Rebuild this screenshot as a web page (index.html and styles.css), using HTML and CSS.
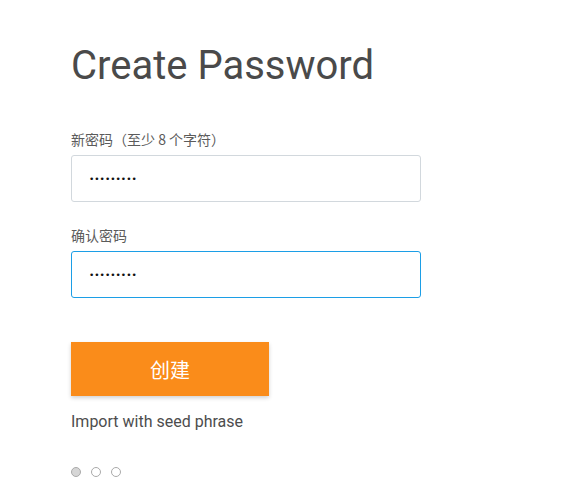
FILE: index.html
```html
<!DOCTYPE html>
<html lang="zh-CN">
<head>
<meta charset="utf-8">
<link rel="stylesheet" href="styles.css">
</head>
<body>
<div class="page">
  <h1 class="title">Create Password</h1>
  <div class="field">
    <label class="label">新密码（至少 8 个字符）</label>
    <div class="input">•••••••••</div>
  </div>
  <div class="field">
    <label class="label">确认密码</label>
    <div class="input focused">•••••••••</div>
  </div>
  <button class="btn">创建</button>
  <div class="import">Import with seed phrase</div>
  <div class="dots">
    <span class="dot active"></span>
    <span class="dot"></span>
    <span class="dot"></span>
  </div>
</div>
</body>
</html>
```
FILE: styles.css
```css
html, body {
  margin: 0;
  padding: 0;
  background: #fff;
}
.page {
  padding: 40px 0 0 71px;
  font-family: Roboto, "Noto Sans CJK SC", sans-serif;
  color: #4d4d4d;
}
.title {
  margin: 0;
  font-size: 40px;
  font-weight: 400;
  line-height: 52px;
  color: #4a4a4a;
}
.field {
  display: flex;
  flex-direction: column;
  margin-top: 37px;
}
.field + .field {
  margin-top: 23px;
}
.label {
  font-size: 14px;
  line-height: 20px;
  color: #5b5b5b;
  margin-bottom: 6px;
  font-family: "Noto Sans CJK SC", sans-serif;
}
.input {
  box-sizing: border-box;
  width: 350px;
  height: 47px;
  border: 1px solid #d2d8dd;
  border-radius: 3px;
  padding: 0 17px;
  display: flex;
  align-items: center;
  font-size: 9px;
  color: #111;
  font-family: "DejaVu Sans", sans-serif;
}
.input.focused {
  border-color: #1c9ee6;
}
.btn {
  display: block;
  margin-top: 44px;
  width: 198px;
  height: 54px;
  border: none;
  border-radius: 0;
  background: #fa8c1a;
  color: #fff;
  font-size: 20px;
  font-family: "Noto Sans CJK SC", sans-serif;
  box-shadow: 0 2px 4px rgba(0,0,0,0.18);
  padding: 0;
}
.import {
  margin-top: 16px;
  font-size: 16px;
  line-height: 20px;
  color: #4d4d4d;
}
.dots {
  display: flex;
  gap: 10px;
  margin-top: 35px;
}
.dot {
  box-sizing: border-box;
  width: 10px;
  height: 10px;
  border-radius: 50%;
  border: 1px solid #aaa;
  background: #fff;
}
.dot.active {
  background: #d6d6d6;
}
```
